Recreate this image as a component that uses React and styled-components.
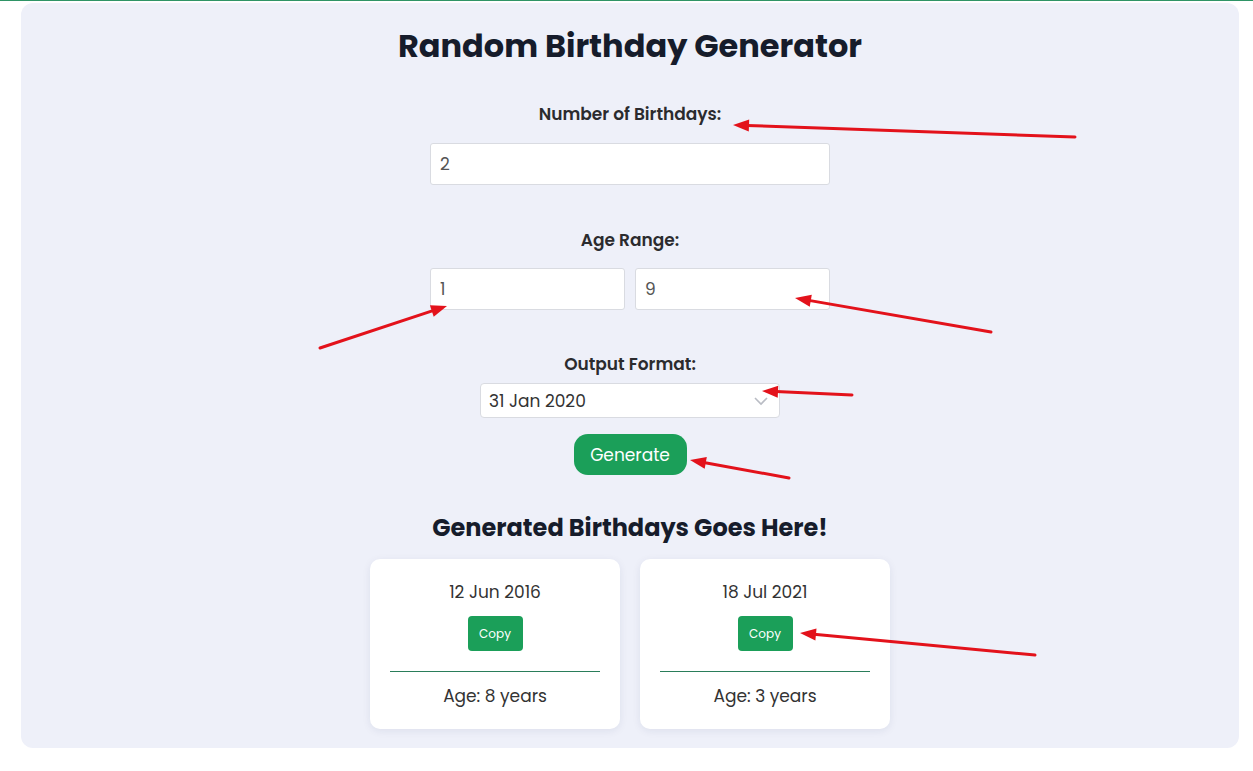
import React from "react";
import styled, { createGlobalStyle } from "styled-components";

const Global = createGlobalStyle`
  html, body { margin: 0; padding: 0; background: #fff; }
  body {
    font-family: "Poppins", "Open Sans", "Liberation Sans", sans-serif;
    border-top: 1px solid #2f9466;
    min-height: 770px;
    position: relative;
  }
  * { box-sizing: border-box; }
`;

const Panel = styled.main`
  margin: 2px 14px 0 21px;
  background: #eef0f9;
  border-radius: 12px;
  padding: 24px 0 19px;
  display: flex;
  flex-direction: column;
  align-items: center;
`;

const Title = styled.h1`
  margin: 0;
  font-size: 32px;
  line-height: 38px;
  font-weight: 700;
  color: #161c2b;
`;

const Field = styled.section`
  display: flex;
  flex-direction: column;
  align-items: center;
  margin-top: ${(p) => p.$top}px;
`;

const Label = styled.label`
  font-size: 17px;
  line-height: 24px;
  font-weight: 600;
  color: #2b2b2e;
  margin-bottom: ${(p) => p.$gap}px;
`;

const TextInput = styled.input`
  width: ${(p) => p.$w}px;
  height: 42px;
  border: 1px solid #d9dbe1;
  border-radius: 3px;
  background: #fff;
  padding: 0 9px;
  font-family: inherit;
  font-size: 17px;
  color: #555;
  outline: none;
`;

const Pair = styled.div`
  display: flex;
  gap: 10px;
`;

const SelectBox = styled.div`
  width: 300px;
  height: 35px;
  border: 1px solid #d9dbe1;
  border-radius: 4px;
  background: #fff;
  display: flex;
  align-items: center;
  justify-content: space-between;
  padding: 0 10px 0 8px;
  font-size: 17px;
  color: #333;
`;

const GenerateButton = styled.button`
  margin-top: 16px;
  width: 113px;
  height: 41px;
  border: none;
  border-radius: 14px;
  background: #1b9f59;
  color: #fff;
  font-family: inherit;
  font-size: 17px;
`;

const Heading = styled.h2`
  margin: 37px 0 0;
  font-size: 24px;
  line-height: 32px;
  font-weight: 700;
  color: #161c2b;
`;

const Cards = styled.div`
  margin-top: 15px;
  display: flex;
  gap: 20px;
`;

const Card = styled.article`
  width: 250px;
  height: 170px;
  background: #fff;
  border-radius: 10px;
  box-shadow: 0 2px 8px rgba(30, 40, 90, 0.08);
  padding: 21px 20px 0;
  display: flex;
  flex-direction: column;
  align-items: center;
`;

const DateText = styled.div`
  font-size: 17px;
  line-height: 24px;
  color: #333;
`;

const CopyButton = styled.button`
  margin-top: 12px;
  width: 55px;
  height: 35px;
  border: none;
  border-radius: 4px;
  background: #1b9f59;
  color: #fff;
  font-family: inherit;
  font-size: 12px;
`;

const Divider = styled.div`
  width: 100%;
  height: 1px;
  margin-top: 20px;
  background: #2a7d5a;
`;

const AgeText = styled.div`
  margin-top: 12px;
  font-size: 17px;
  line-height: 24px;
  color: #333;
`;

const Annotations = styled.svg`
  position: absolute;
  left: 0;
  top: -1px;
  width: 1253px;
  height: 771px;
  pointer-events: none;
`;

const arrows = [
  [1075, 137, 733, 125],
  [320, 348, 447, 306],
  [991, 332, 795, 298],
  [852, 395, 762, 391],
  [789, 478, 690, 460],
  [1035, 655, 800, 633],
];

function Arrow({ x1, y1, x2, y2 }) {
  const dx = x2 - x1;
  const dy = y2 - y1;
  const len = Math.hypot(dx, dy);
  const ux = dx / len;
  const uy = dy / len;
  const hl = 16;
  const hw = 6;
  const bx = x2 - ux * hl;
  const by = y2 - uy * hl;
  const pts = `${x2},${y2} ${bx - uy * hw},${by + ux * hw} ${bx + uy * hw},${by - ux * hw}`;
  return (
    <g>
      <line x1={x1} y1={y1} x2={bx + ux * 2} y2={by + uy * 2} stroke="#e3121b" strokeWidth="3" strokeLinecap="round" />
      <polygon points={pts} fill="#e3121b" />
    </g>
  );
}

function Chevron() {
  return (
    <svg width="16" height="10" viewBox="0 0 16 10">
      <path d="M2 2 L8 8 L14 2" fill="none" stroke="#b9bcc4" strokeWidth="1.6" />
    </svg>
  );
}

const results = [
  { date: "12 Jun 2016", age: "Age: 8 years" },
  { date: "18 Jul 2021", age: "Age: 3 years" },
];

export default function App() {
  return (
    <>
      <Global />
      <Panel>
        <Title>Random Birthday Generator</Title>
        <Field $top={37}>
          <Label $gap={17}>Number of Birthdays:</Label>
          <TextInput $w={400} defaultValue="2" />
        </Field>
        <Field $top={43}>
          <Label $gap={16}>Age Range:</Label>
          <Pair>
            <TextInput $w={195} defaultValue="1" />
            <TextInput $w={195} defaultValue="9" />
          </Pair>
        </Field>
        <Field $top={42}>
          <Label $gap={7}>Output Format:</Label>
          <SelectBox>
            <span>31 Jan 2020</span>
            <Chevron />
          </SelectBox>
        </Field>
        <GenerateButton>Generate</GenerateButton>
        <Heading>Generated Birthdays Goes Here!</Heading>
        <Cards>
          {results.map((r) => (
            <Card key={r.date}>
              <DateText>{r.date}</DateText>
              <CopyButton>Copy</CopyButton>
              <Divider />
              <AgeText>{r.age}</AgeText>
            </Card>
          ))}
        </Cards>
      </Panel>
      <Annotations viewBox="0 0 1253 771">
        {arrows.map(([x1, y1, x2, y2], i) => (
          <Arrow key={i} x1={x1} y1={y1} x2={x2} y2={y2} />
        ))}
      </Annotations>
    </>
  );
}
